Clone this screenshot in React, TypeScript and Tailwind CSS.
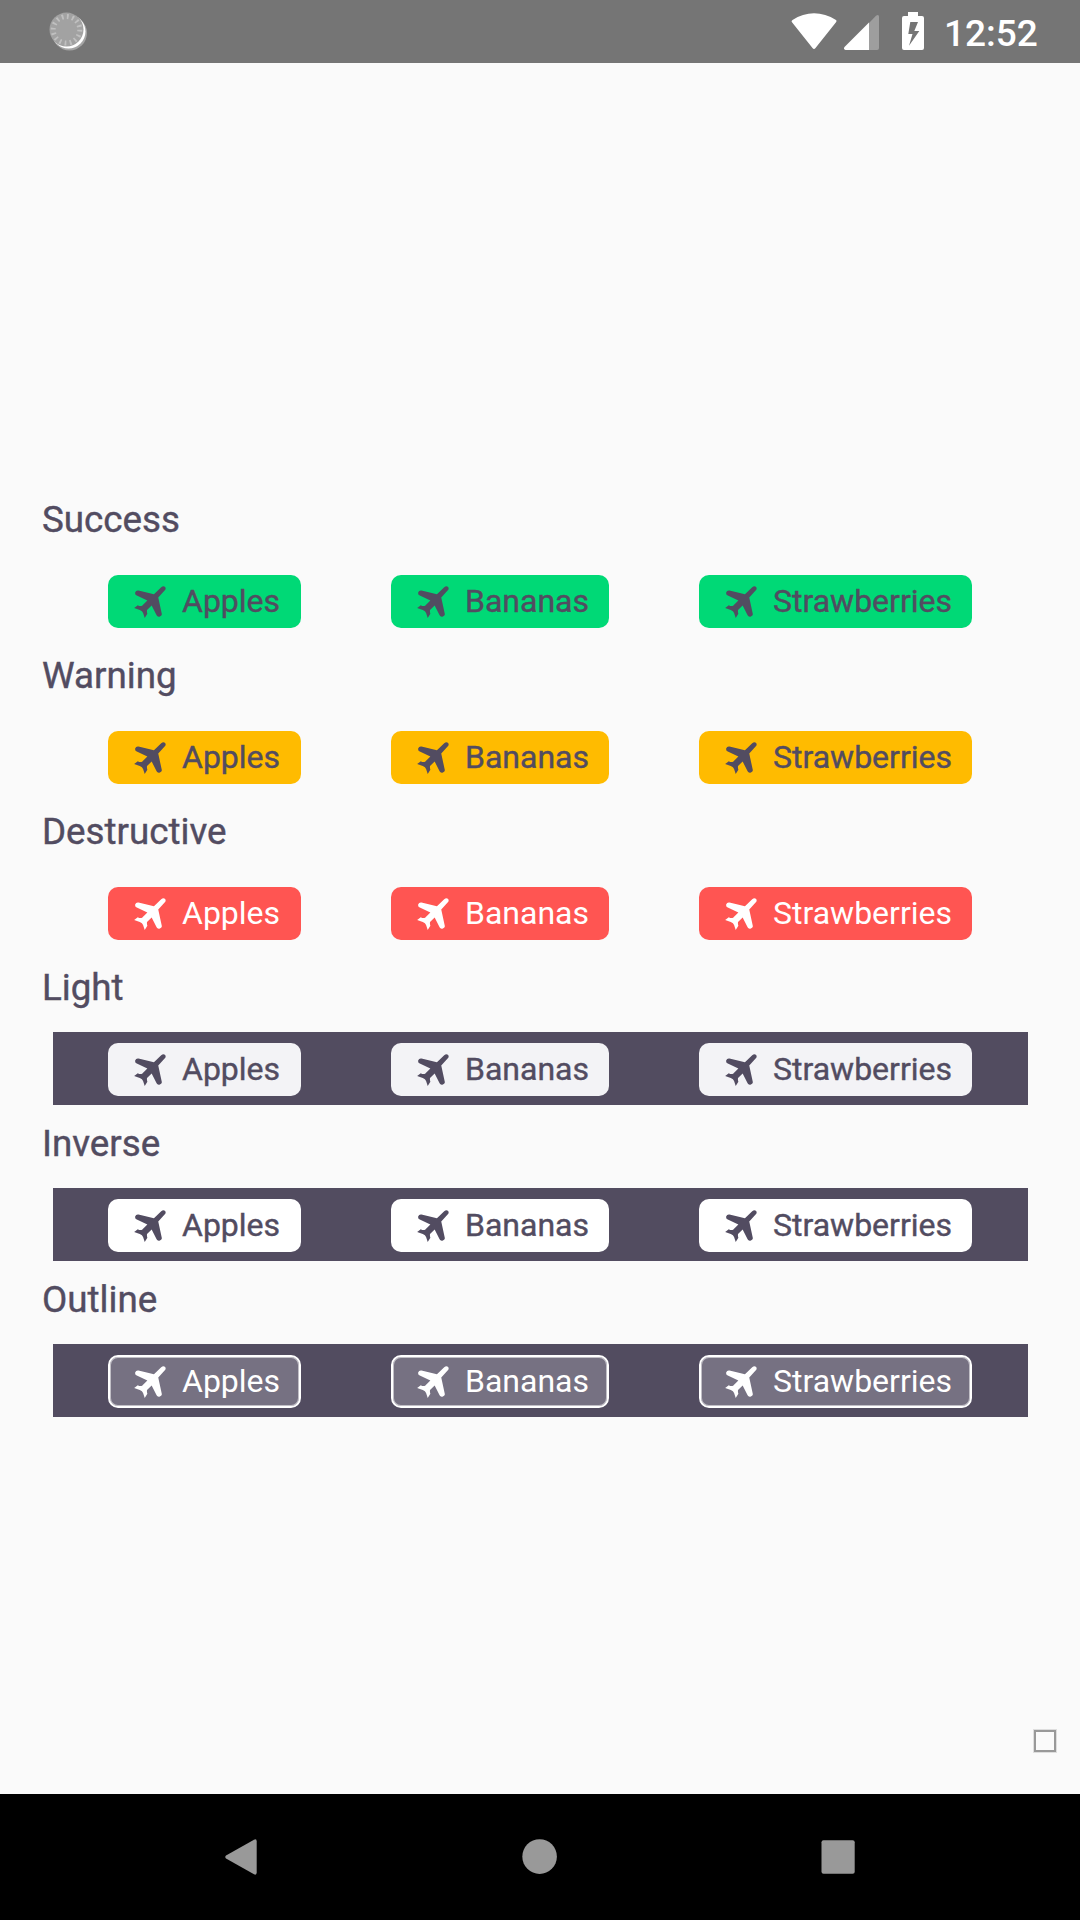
type Variant = {
  label: string;
  panel: string;
  badge: string;
};

const fruits = [
  { name: 'Apples', width: 'w-[193px]' },
  { name: 'Bananas', width: 'w-[218px]' },
  { name: 'Strawberries', width: 'w-[273px]' },
];

const darkText = 'text-[#524c61] [-webkit-text-stroke:0.4px_currentColor]';

const variants: Variant[] = [
  { label: 'Success', panel: '', badge: `bg-[#00d976] ${darkText}` },
  { label: 'Warning', panel: '', badge: `bg-[#ffbb00] ${darkText}` },
  { label: 'Destructive', panel: '', badge: 'bg-[#ff5552] text-white' },
  { label: 'Light', panel: 'bg-[#524c60]', badge: `bg-[#f3f3f6] ${darkText}` },
  { label: 'Inverse', panel: 'bg-[#524c60]', badge: `bg-white ${darkText}` },
  {
    label: 'Outline',
    panel: 'bg-[#524c60]',
    badge: 'bg-[#767182] text-white border-2 border-white shadow-[inset_0_0_0_1px_rgba(255,255,255,0.55)]',
  },
];

function Plane() {
  return (
    <svg viewBox="42 43 96 97" className="h-[32px] w-[32px] shrink-0" fill="currentColor">
      <path d="M124 47Q130 41 135 45Q140 50 135 56L115 78L126 129Q126 134 120 135.5Q113 138 110 132L95 102L81 116Q80 122 82 127L74 140L69 125Q67 119 59 116L42 110L53 101Q59 105 66 103L82 87L50 72Q44 70 45 63Q47 56 55 57L102 68Z" />
    </svg>
  );
}

function Badge({ name, width, tone }: { name: string; width: string; tone: string }) {
  return (
    <div className={`box-border flex h-[53px] items-center rounded-[10px] ${width} ${tone}`}>
      <span className={`flex items-center ${tone.includes('border-2') ? 'pl-6' : 'pl-[26px]'}`}>
        <Plane />
        <span className="ml-4 text-[32px] leading-[37px]">{name}</span>
      </span>
    </div>
  );
}

function StatusBar() {
  return (
    <header className="flex h-[63px] items-start bg-[#757575] text-white">
      <svg className="ml-[46px] mt-[9px] h-[44px] w-[44px]" viewBox="46 9 44 44">
        <circle cx="69.5" cy="33" r="17.5" fill="#a5a5a5" />
        <circle cx="68.5" cy="31.6" r="17" fill="#fff" />
        <circle cx="66.5" cy="29.6" r="17" fill="#a2a2a2" />
        <circle cx="66.5" cy="29.8" r="13.3" fill="none" stroke="#c0c0c0" strokeWidth="5" strokeDasharray="1.8 3.423" />
      </svg>
      <svg className="ml-[700px] mt-[12px] h-[38px] w-[134px]" viewBox="790 12 134 38" fill="currentColor">
        <path d="M792 22.3Q791 21 792.5 20C806 11 822 11 836 20Q837 21 836 22.3L815.5 48Q814 50 812.5 48Z" />
        <path d="M869 23L876 15.7Q879 14 879 17V48Q879 50 877 50H869Z" opacity=".3" />
        <path d="M869 22.5V50H845.5Q843 49 844.5 47Z" />
        <path fillRule="evenodd" d="M908 12h10v4h4q2 0 2 2v30q0 2-2 2h-18q-2 0-2-2v-30q0-2 2-2h4zM910.3 22L908.3 34H912.5L909 45.7L919.3 31H914.3L918 22z" />
      </svg>
      <span className="ml-[20px] mt-[12px] text-[37px] leading-[43px] font-medium">12:52</span>
    </header>
  );
}

export default function App() {
  return (
    <div className="flex h-[1920px] w-[1080px] flex-col overflow-hidden bg-[#fafafa] font-['Roboto',sans-serif]">
      <StatusBar />
      <main className="flex flex-1 flex-col pt-[435px]">
        {variants.map((v) => (
          <section key={v.label} className="mb-[17px]">
            <h2 className="ml-[42px] text-[36.75px] leading-[43px] text-[#524c61] [-webkit-text-stroke:0.4px_currentColor]">
              {v.label}
            </h2>
            <div className={`ml-[53px] mt-[23px] flex h-[73px] w-[975px] gap-[90px] pl-[55px] pt-[11px] ${v.panel}`}>
              {fruits.map((f) => (
                <Badge key={f.name} name={f.name} width={f.width} tone={v.badge} />
              ))}
            </div>
          </section>
        ))}
        <div className="mr-[24px] mt-auto mb-[42px] h-[22px] w-[22px] self-end border-2 border-[#999] outline-1 outline-[#dedede]" />
      </main>
      <nav className="flex h-[126px] justify-center bg-black">
        <svg className="mt-[44px] h-[38px] w-[632px]" viewBox="224 1838 632 38" fill="#999">
          <path d="M226 1855.5L254 1839.7Q256.7 1838.5 256.7 1841.5V1872.5Q256.7 1875.5 254 1874.3L226 1858.5Q224.5 1857 226 1855.5Z" />
          <circle cx="539.6" cy="1856.6" r="17.3" />
          <rect x="821.5" y="1840.3" width="33.2" height="33.4" rx="2" />
        </svg>
      </nav>
    </div>
  );
}
